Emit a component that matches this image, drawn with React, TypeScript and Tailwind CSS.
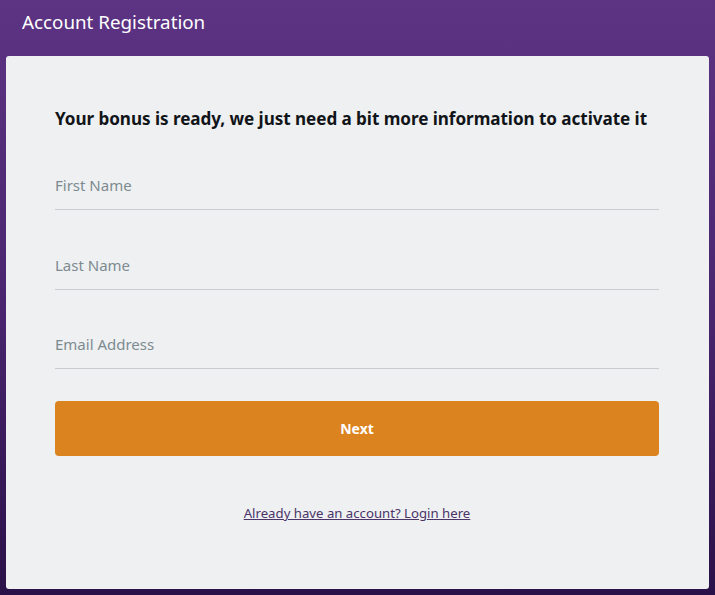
export default function App() {
  const fields = ["First Name", "Last Name", "Email Address"];
  return (
    <div
      className="w-[715px] h-[595px] flex flex-col bg-[linear-gradient(180deg,#5d3383_0%,#4a2670_50%,#2a1048_100%)] font-['Noto_Sans',sans-serif] overflow-hidden"
    >
      <div className="h-[56px] pl-[22px] pt-[9px] text-white text-[18.8px] leading-[26px]">
        Account Registration
      </div>
      <div className="mx-[6px] h-[533px] rounded-[3px] bg-[#eef0f2] pl-[49px] pr-[50px] pt-[51px] flex flex-col">
        <h1 className="text-[17.1px] leading-[24px] font-bold text-[#111418] tracking-[-0.05px]">
          Your bonus is ready, we just need a bit more information to activate it
        </h1>
        <div className="mt-[32px] flex flex-col gap-[32.5px]">
          {fields.map((f) => (
            <div
              key={f}
              className="h-[47px] border-b border-[#c9cccf] flex items-end pb-[13px] text-[15px] leading-[22px] text-[#7d8b90]"
            >
              {f}
            </div>
          ))}
        </div>
        <button className="mt-[32px] h-[55px] w-full rounded-[4px] bg-[#db831f] text-white text-[14px] font-bold">
          Next
        </button>
        <div className="mt-[44px] text-center">
          <a className="text-[13.2px] leading-[18px] text-[#4a3468] underline" href="#">
            Already have an account? Login here
          </a>
        </div>
      </div>
    </div>
  );
}
